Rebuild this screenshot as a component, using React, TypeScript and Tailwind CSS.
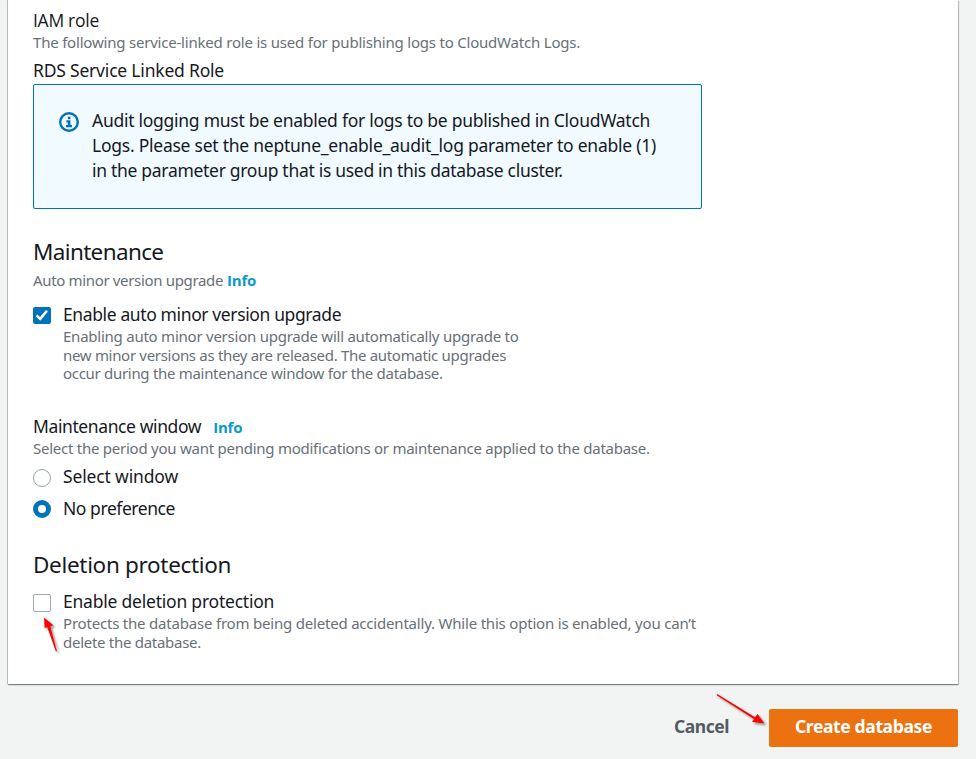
function InfoIcon() {
  return (
    <svg width="20" height="20" viewBox="0 0 20 20" fill="none" className="block shrink-0">
      <circle cx="10" cy="10" r="8.8" stroke="#0073bb" strokeWidth="2.4" />
      <path d="M8.8 4.8h2.6v2.4H8.8zM7.4 8.3h4V13H13v2.2H7v-2.2h1.8v-2.5H7.4z" fill="#0073bb" />
    </svg>
  );
}

function CheckedBox() {
  return (
    <span className="flex h-[17px] w-[18px] shrink-0 items-center justify-center rounded-xs bg-[#0073bb]">
      <svg width="18" height="17" viewBox="0 0 18 17" fill="none">
        <path d="M3.5 8.3l3.7 3.6L14 3.7" stroke="#fff" strokeWidth="2.5" />
      </svg>
    </span>
  );
}

function InfoLink() {
  return (
    <a className="font-['Open_Sans',sans-serif] text-[15px] font-bold tracking-[-0.2px] text-[#0a9bc5]">Info</a>
  );
}

const label = "text-[17.5px] leading-[22px] whitespace-nowrap";
const hint = "text-[15px] leading-[22px] whitespace-nowrap text-[#687078]";
const detail = "text-[15px] leading-[18.75px] whitespace-nowrap text-[#687078]";
const heading = "text-[22.5px] leading-7 whitespace-nowrap";

export default function App() {
  return (
    <div className="relative flex h-[759px] w-[976px] flex-col overflow-hidden bg-[#f2f3f3] font-['Noto_Sans','Open_Sans',sans-serif] text-[#16191f]">
      <main className="ml-2 h-[684px] w-[950px] shrink-0 bg-white pt-[9px] pl-[25px] shadow-[0_1px_1px_0_rgba(0,28,36,0.4),-1px_0_0_0_#c4c8c9,1px_1px_1px_0_rgba(0,28,36,0.2)]">
        <div className={`${label} font-['Open_Sans',sans-serif] tracking-[-0.28px]`}>IAM role</div>
        <div className={`${hint} tracking-[-0.205px]`}>
          The following service-linked role is used for publishing logs to CloudWatch Logs.
        </div>
        <div className={`${label} mt-1.5 tracking-[-0.2px]`}>RDS Service Linked Role</div>

        <div className="mt-[3px] flex h-[125px] w-[669px] rounded-xs border border-[#0073bb] bg-[#f1faff] pt-[23px] pl-[25px]">
          <div className="pt-1">
            <InfoIcon />
          </div>
          <div className="ml-[13px] text-[17.5px] leading-[25px] whitespace-nowrap">
            <p className="tracking-[-0.27px]">Audit logging must be enabled for logs to be published in CloudWatch</p>
            <p className="tracking-[-0.245px]">Logs. Please set the neptune_enable_audit_log parameter to enable (1)</p>
            <p className="tracking-[-0.3px]">in the parameter group that is used in this database cluster.</p>
          </div>
        </div>

        <h2 className={`${heading} mt-[29px] tracking-[-0.65px]`}>Maintenance</h2>
        <div className={`${hint} mt-[3px] flex gap-1 tracking-[-0.34px]`}>
          <span>Auto minor version upgrade</span>
          <InfoLink />
        </div>
        <div className="mt-3 flex gap-3">
          <div className="pt-1">
            <CheckedBox />
          </div>
          <div>
            <div className={`${label} tracking-[-0.38px]`}>Enable auto minor version upgrade</div>
            <div className={`${detail} mt-0.5 h-14`}>
              <p className="leading-[19px] tracking-[-0.24px]">
                Enabling auto minor version upgrade will automatically upgrade to
              </p>
              <p className="leading-[19px] tracking-[-0.31px]">
                new minor versions as they are released. The automatic upgrades
              </p>
              <p className="leading-[17px] tracking-[-0.3px]">occur during the maintenance window for the database.</p>
            </div>
          </div>
        </div>

        <div className={`${label} mt-8 flex h-[22px] gap-3 tracking-[-0.4px]`}>
          <span>Maintenance window</span>
          <span className="flex leading-6">
            <InfoLink />
          </span>
        </div>
        <div className={`${hint} h-[22px] tracking-[-0.25px]`}>
          Select the period you want pending modifications or maintenance applied to the database.
        </div>
        <div className="mt-1.5 flex h-[22px] items-center gap-3">
          <span className="mt-1 h-[18px] w-[18px] rounded-full border border-[#95a3a5] bg-white" />
          <span className={`${label} tracking-[-0.15px]`}>Select window</span>
        </div>
        <div className="mt-2.5 flex h-[22px] items-center gap-3">
          <span className="mt-0.5 h-[18px] w-[18px] rounded-full border-[5.5px] border-[#0073bb] bg-white" />
          <span className={`${label} tracking-[-0.44px]`}>No preference</span>
        </div>

        <h2 className={`${heading} mt-8 tracking-[-0.32px]`}>Deletion protection</h2>
        <div className="mt-[11px] flex gap-3">
          <span className="mt-1 h-[18px] w-[18px] rounded-xs border border-[#9fadae] bg-white" />
          <div>
            <div className={`${label} tracking-[-0.22px]`}>Enable deletion protection</div>
            <div className={`${detail} mt-0.5`}>
              <p className="tracking-[-0.2px]">
                Protects the database from being deleted accidentally. While this option is enabled, you can’t
              </p>
              <p className="tracking-[-0.28px]">delete the database.</p>
            </div>
          </div>
        </div>
      </main>

      <footer className="mt-[25px] mr-[18px] flex h-[38px] items-center justify-end gap-10 text-[17.5px] leading-[22px] font-bold">
        <button className="pb-1 tracking-[-0.47px] text-[#545b64]">Cancel</button>
        <button className="h-[38px] w-[189px] rounded-xs bg-[#ec7211] pb-1 tracking-[-0.37px] text-white">
          Create database
        </button>
      </footer>

      {/* Red pointer arrows drawn over the form */}
      <svg
        className="pointer-events-none absolute inset-0 drop-shadow-[2px_2px_1px_rgba(0,0,0,0.4)]"
        width="976"
        height="759"
        viewBox="0 0 976 759"
        fill="#fe0000"
      >
        <path d="M44 617.5L53.4 625.2L50.2 626.3L57 651.3L55.8 651.2L47.3 627.2L44.6 628Z" />
        <path d="M717.2 694L755 717.2L757.6 714L764.3 723.3L752.2 722L754 719L716.6 695.2Z" />
      </svg>
    </div>
  );
}
